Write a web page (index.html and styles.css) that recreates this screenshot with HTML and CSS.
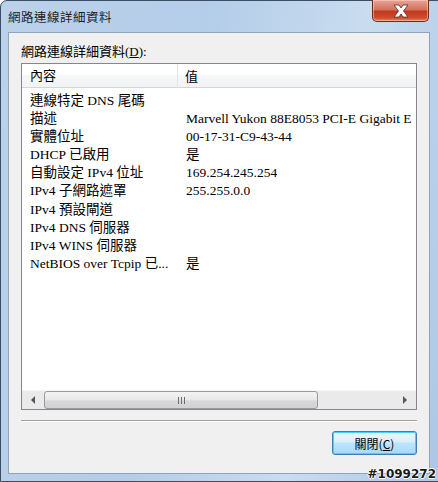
FILE: index.html
```html
<!DOCTYPE html>
<html lang="zh-Hant">
    <head>
        <meta charset="UTF-8">
        <title>網路連線詳細資料</title>
        <link rel="stylesheet" href="styles.css">
    </head>
    <body>
        <div class="window">
            <div class="titlebar">
                <span class="title">網路連線詳細資料</span>
                <div class="closeBtn">
                    <svg width="20" height="14" viewBox="0 0 20 14">
                        <path d="M3 1 H8 L10 4 L12 1 H17 L12.5 7 L17 13 H12 L10 10 L8 13 H3 L7.5 7 Z" fill="#fff" stroke="#5a2a25" stroke-width="0.8"/>
                    </svg>
                </div>
            </div>
            <div class="client">
                <div class="label">網路連線詳細資料(<u>D</u>):</div>
                <div class="listbox">
                    <div class="header">
                        <div class="colName">內容</div>
                        <div class="colValue">值</div>
                    </div>
                    <div class="rows">
                        <div class="row"><span class="name">連線特定 DNS 尾碼</span><span class="value"></span></div>
                        <div class="row"><span class="name">描述</span><span class="value">Marvell Yukon 88E8053 PCI-E Gigabit E</span></div>
                        <div class="row"><span class="name">實體位址</span><span class="value">00-17-31-C9-43-44</span></div>
                        <div class="row"><span class="name">DHCP 已啟用</span><span class="value">是</span></div>
                        <div class="row"><span class="name">自動設定 IPv4 位址</span><span class="value">169.254.245.254</span></div>
                        <div class="row"><span class="name">IPv4 子網路遮罩</span><span class="value">255.255.0.0</span></div>
                        <div class="row"><span class="name">IPv4 預設閘道</span><span class="value"></span></div>
                        <div class="row"><span class="name">IPv4 DNS 伺服器</span><span class="value"></span></div>
                        <div class="row"><span class="name">IPv4 WINS 伺服器</span><span class="value"></span></div>
                        <div class="row"><span class="name">NetBIOS over Tcpip 已...</span><span class="value">是</span></div>
                    </div>
                    <div class="hscroll">
                        <div class="arrow">
                            <svg width="6" height="8" viewBox="0 0 6 8"><path d="M5 0 V8 L1 4 Z" fill="#555"/></svg>
                        </div>
                        <div class="track">
                            <div class="thumb">
                                <span class="grip"></span><span class="grip"></span><span class="grip"></span>
                            </div>
                        </div>
                        <div class="arrow">
                            <svg width="6" height="8" viewBox="0 0 6 8"><path d="M1 0 V8 L5 4 Z" fill="#555"/></svg>
                        </div>
                    </div>
                </div>
                <div class="separator"></div>
                <div class="buttons">
                    <button class="button">關閉(<u>C</u>)</button>
                </div>
            </div>
            <div class="watermark">#1099272</div>
        </div>
    </body>
</html>
```

FILE: styles.css
```css
* {
    box-sizing: border-box;
}
body {
    margin: 0;
    width: 438px;
    height: 482px;
    overflow: hidden;
    font-family: "Liberation Serif", "Noto Sans CJK TC", serif;
    font-size: 13px;
    color: #000;
}
.window {
    position: relative;
    width: 444px;
    height: 482px;
    display: flex;
    flex-direction: column;
    background: linear-gradient(100deg, #bcd1ea 0%, #b4cde8 40%, #c9dcf0 70%, #abc7e6 100%);
    border: 1px solid #3b4e64;
    border-top-left-radius: 7px;
    border-top-right-radius: 7px;
    padding: 0 7px 7px 7px;
}
.titlebar {
    height: 31px;
    display: flex;
    justify-content: space-between;
    align-items: flex-start;
}
.title {
    margin-top: 6px;
    font-size: 12.5px;
    color: #1e1e1e;
    font-family: "Noto Sans CJK TC", sans-serif;
    letter-spacing: 0.5px;
}
.closeBtn {
    width: 57px;
    height: 22px;
    margin-right: 7px;
    margin-top: -1px;
    display: flex;
    align-items: center;
    justify-content: center;
    border: 1px solid #6b2a20;
    border-top: none;
    border-radius: 0 0 5px 5px;
    background: linear-gradient(#e8a497 0%, #d5725f 45%, #c0391f 55%, #d04c2e 85%, #e7855f 100%);
    box-shadow: inset 0 0 0 1px rgba(255, 220, 210, 0.5);
}
.client {
    flex: 1;
    width: 422px;
    background: #f0f0f0;
    border: 1px solid #8ea4bd;
    padding: 11px 12px 0 12px;
    display: flex;
    flex-direction: column;
}
.label {
    line-height: 16px;
    height: 19px;
}
.label u, .button u {
    text-decoration: underline;
}
.listbox {
    height: 347px;
    background: #fff;
    border: 1px solid #828790;
    display: flex;
    flex-direction: column;
}
.header {
    height: 24px;
    display: flex;
    align-items: center;
    background: linear-gradient(#ffffff 0%, #ffffff 45%, #f6f7f9 50%, #f2f3f5 100%);
    border-bottom: 1px solid #d5d5d5;
}
.colName {
    width: 156px;
    padding-left: 8px;
    border-right: 1px solid #e3e4e6;
    height: 24px;
    line-height: 24px;
}
.colValue {
    padding-left: 7px;
}
.rows {
    flex: 1;
    padding-top: 4px;
    overflow: hidden;
    font-size: 13.5px;
}
.row {
    display: flex;
    height: 18.1px;
    line-height: 18px;
    white-space: nowrap;
}
.name {
    width: 156px;
    flex-shrink: 0;
    padding-left: 8px;
}
.value {
    padding-left: 8px;
    overflow: hidden;
}
.hscroll {
    height: 19px;
    display: flex;
    background: #eaeaea;
    border-top: 1px solid #f5f5f5;
}
.arrow {
    width: 22px;
    display: flex;
    align-items: center;
    justify-content: center;
}
.track {
    flex: 1;
    background: #eaeaea;
    padding-right: 76px;
}
.thumb {
    height: 18px;
    border: 1px solid #9a9a9a;
    border-radius: 3px;
    background: linear-gradient(#f3f3f3 0%, #e8e8e8 50%, #d8d8d8 55%, #d2d2d2 100%);
    display: flex;
    align-items: center;
    justify-content: center;
    gap: 1px;
}
.grip {
    width: 1px;
    height: 7px;
    background: #6a6a6a;
    margin: 0 0.5px;
}
.separator {
    margin-top: 10px;
    height: 2px;
    border-top: 1px solid #a0a0a0;
    border-bottom: 1px solid #ffffff;
}
.buttons {
    display: flex;
    justify-content: flex-end;
    padding-top: 9px;
}
.button {
    width: 85px;
    height: 24px;
    font-family: "Noto Sans CJK TC", sans-serif;
    font-size: 12px;
    color: #000;
    border: 1px solid #3c7fb1;
    border-radius: 3px;
    background: linear-gradient(#eaf6fd 0%, #d9f0fc 45%, #bee6fd 50%, #a7d9f5 100%);
    box-shadow: inset 0 0 0 1px #48d0ff;
    padding: 0;
}
.watermark {
    position: absolute;
    right: 7px;
    bottom: 0;
    font-family: "DejaVu Sans", sans-serif;
    font-weight: bold;
    font-size: 12px;
    color: #1a1a1a;
    text-shadow: 1px 0 #fff, -1px 0 #fff, 0 1px #fff, 0 -1px #fff;
}
```
